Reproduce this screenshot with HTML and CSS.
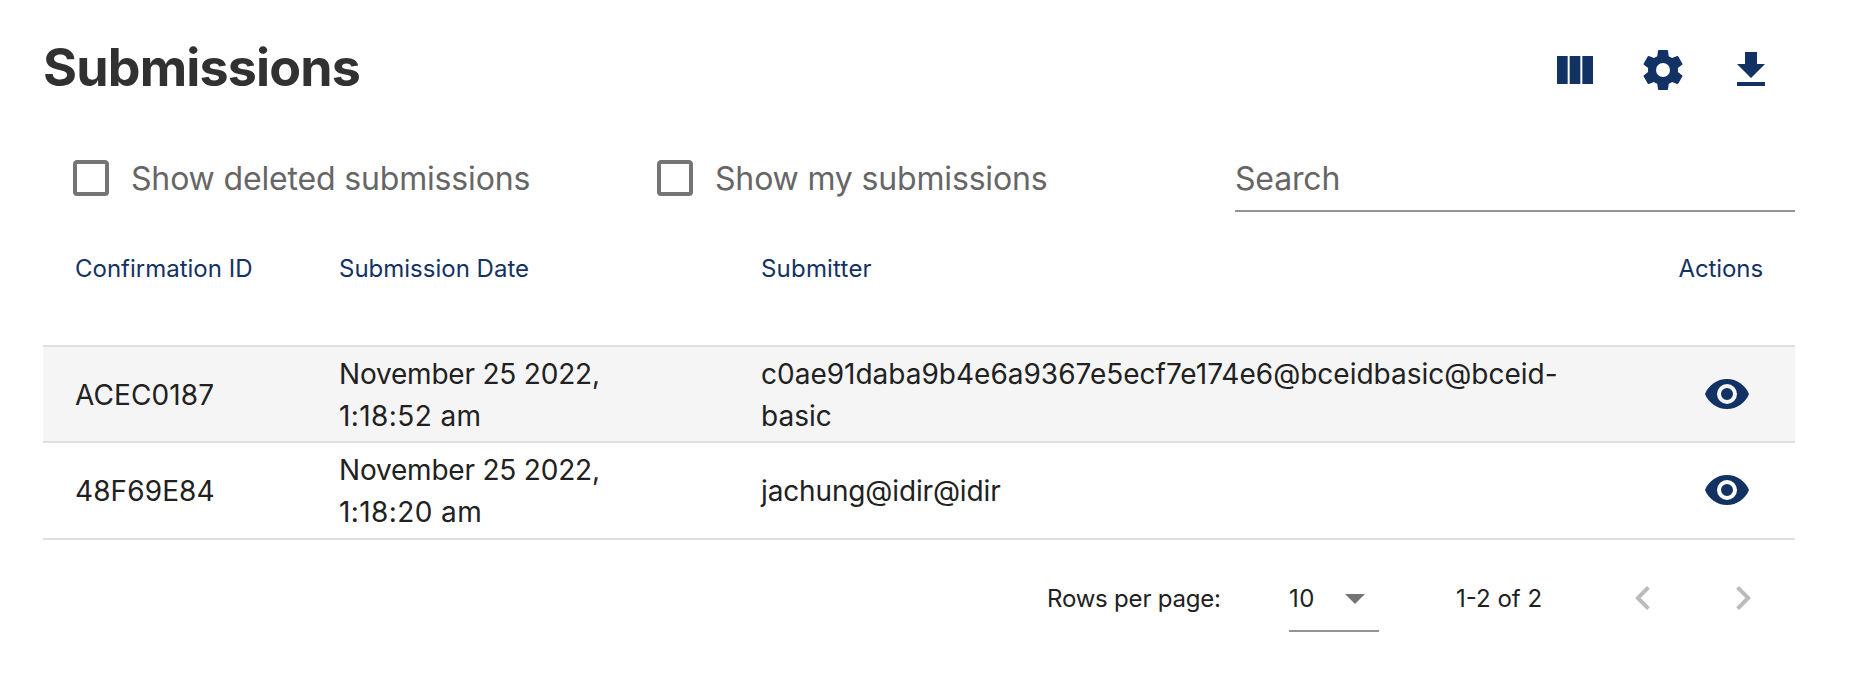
FILE: index.html
```html
<!DOCTYPE html>
<html lang="en">
<head>
<meta charset="utf-8">
<title>Submissions</title>
<link rel="stylesheet" href="styles.css">
</head>
<body>
<main class="page">
  <header class="page-header">
    <h1 class="title">Submissions</h1>
    <div class="toolbar">
      <svg class="icon" viewBox="0 0 24 24"><path d="M14.67,5V19H9.33V5H14.67M15.67,19H21V5H15.67V19M8.33,19V5H3V19H8.33Z"/></svg>
      <svg class="icon" viewBox="0 0 24 24"><path d="M12,15.5A3.5,3.5 0 0,1 8.5,12A3.5,3.5 0 0,1 12,8.5A3.5,3.5 0 0,1 15.5,12A3.5,3.5 0 0,1 12,15.5M19.43,12.97C19.47,12.65 19.5,12.33 19.5,12C19.5,11.67 19.47,11.34 19.43,11L21.54,9.37C21.73,9.22 21.78,8.95 21.66,8.73L19.66,5.27C19.54,5.05 19.27,4.96 19.05,5.05L16.56,6.05C16.04,5.66 15.5,5.32 14.87,5.07L14.5,2.42C14.46,2.18 14.25,2 14,2H10C9.75,2 9.54,2.18 9.5,2.42L9.13,5.07C8.5,5.32 7.96,5.66 7.44,6.05L4.95,5.05C4.73,4.96 4.46,5.05 4.34,5.27L2.34,8.73C2.21,8.95 2.27,9.22 2.46,9.37L4.57,11C4.53,11.34 4.5,11.67 4.5,12C4.5,12.33 4.53,12.65 4.57,12.97L2.46,14.63C2.27,14.78 2.21,15.05 2.34,15.27L4.34,18.73C4.46,18.95 4.73,19.03 4.95,18.95L7.44,17.94C7.96,18.34 8.5,18.68 9.13,18.93L9.5,21.58C9.54,21.82 9.75,22 10,22H14C14.25,22 14.46,21.82 14.5,21.58L14.87,18.93C15.5,18.67 16.04,18.34 16.56,17.94L19.05,18.95C19.27,19.03 19.54,18.95 19.66,18.73L21.66,15.27C21.78,15.05 21.73,14.78 21.54,14.63L19.43,12.97Z"/></svg>
      <svg class="icon" viewBox="0 0 24 24"><path d="M5,20H19V18H5M19,9H15V3H9V9H5L12,16L19,9Z"/></svg>
    </div>
  </header>
  <section class="filters">
    <label class="check"><svg class="icon box" viewBox="0 0 24 24"><path d="M19,3H5C3.89,3 3,3.89 3,5V19A2,2 0 0,0 5,21H19A2,2 0 0,0 21,19V5C21,3.89 20.1,3 19,3M19,5V19H5V5H19Z"/></svg><span class="check-label">Show deleted submissions</span></label>
    <label class="check"><svg class="icon box" viewBox="0 0 24 24"><path d="M19,3H5C3.89,3 3,3.89 3,5V19A2,2 0 0,0 5,21H19A2,2 0 0,0 21,19V5C21,3.89 20.1,3 19,3M19,5V19H5V5H19Z"/></svg><span class="check-label">Show my submissions</span></label>
    <div class="search">Search</div>
  </section>
  <table class="table">
    <colgroup><col class="col-id"><col class="col-date"><col class="col-user"><col class="col-actions"></colgroup>
    <thead><tr><th>Confirmation ID</th><th>Submission Date</th><th class="submitter">Submitter</th><th class="end">Actions</th></tr></thead>
    <tbody>
      <tr class="hovered">
        <td class="code">ACEC0187</td>
        <td><span class="date">November 25 2022,</span><br><span class="time">1:18:52 am</span></td>
        <td>c0ae91daba9b4e6a9367e5ecf7e174e6@bceidbasic@bceid-<br>basic</td>
        <td class="end"><svg class="icon eye" viewBox="0 0 24 24"><path d="M12,9A3,3 0 0,0 9,12A3,3 0 0,0 12,15A3,3 0 0,0 15,12A3,3 0 0,0 12,9M12,17A5,5 0 0,1 7,12A5,5 0 0,1 12,7A5,5 0 0,1 17,12A5,5 0 0,1 12,17M12,4.5C7,4.5 2.73,7.61 1,12C2.73,16.39 7,19.5 12,19.5C17,19.5 21.27,16.39 23,12C21.27,7.61 17,4.5 12,4.5Z"/></svg></td>
      </tr>
      <tr class="last">
        <td class="code">48F69E84</td>
        <td><span class="date">November 25 2022,</span><br><span class="time">1:18:20 am</span></td>
        <td class="user">jachung@idir@idir</td>
        <td class="end"><svg class="icon eye" viewBox="0 0 24 24"><path d="M12,9A3,3 0 0,0 9,12A3,3 0 0,0 12,15A3,3 0 0,0 15,12A3,3 0 0,0 12,9M12,17A5,5 0 0,1 7,12A5,5 0 0,1 12,7A5,5 0 0,1 17,12A5,5 0 0,1 12,17M12,4.5C7,4.5 2.73,7.61 1,12C2.73,16.39 7,19.5 12,19.5C17,19.5 21.27,16.39 23,12C21.27,7.61 17,4.5 12,4.5Z"/></svg></td>
      </tr>
    </tbody>
  </table>
  <footer class="pager">
    <span class="rows-label">Rows per page:</span>
    <div class="select"><span class="value">10</span><svg class="icon caret" viewBox="0 0 24 24"><path d="M7,10L12,15L17,10H7Z"/></svg></div>
    <span class="range">1-2 of 2</span>
    <svg class="icon nav prev" viewBox="0 0 24 24"><path d="M15.41,16.58L10.83,12L15.41,7.41L14,6L8,12L14,18L15.41,16.58Z"/></svg>
    <svg class="icon nav" viewBox="0 0 24 24"><path d="M8.59,16.58L13.17,12L8.59,7.41L10,6L16,12L10,18L8.59,16.58Z"/></svg>
  </footer>
</main>
</body>
</html>
```
FILE: styles.css
```css
* { box-sizing: border-box; }
body {
  margin: 0;
  background: #fff;
  color: #212121;
  font-family: Inter, "Liberation Sans", sans-serif;
}
.page { padding: 36px 69px 0 43px; }
.icon { display: block; flex: none; width: 48px; height: 48px; fill: #133264; }

.page-header { display: flex; justify-content: space-between; height: 106px; }
.title { margin: 0; color: #313132; font-size: 52px; font-weight: 700; line-height: 64px; letter-spacing: -0.85px; }
.toolbar { display: flex; gap: 40px; padding: 10px 20px 0 0; }

.filters { display: grid; grid-template-columns: 584px 608px 560px; height: 70px; color: #666; font-size: 32px; line-height: 50px; letter-spacing: -0.16px; }
.check { display: flex; align-items: flex-start; gap: 16px; padding: 12px 0 0 24px; }
.box { fill: #757575; }
.search { padding-top: 12px; border-bottom: 2px solid #949494; }

.table { width: 1752px; table-layout: fixed; border-spacing: 0; border-bottom: 2px solid #dfdfdf; font-size: 28px; line-height: 42px; }
.col-id { width: 264px; }
.col-date { width: 422px; }
.col-user { width: 880px; }
th { height: 133px; padding: 42px 32px 0; color: #133264; font-size: 24px; font-weight: 400; line-height: 30px; text-align: left; vertical-align: top; }
th.submitter { letter-spacing: 0.2px; }
th.end { text-align: right; letter-spacing: -0.1px; }
td { height: 96px; padding: 2px 32px 0; border-top: 2px solid #dfdfdf; vertical-align: middle; }
.hovered td { background: #f5f5f5; }
.last td { height: 97px; padding-bottom: 1px; }
.code { letter-spacing: 0.1px; }
.date { letter-spacing: -0.2px; }
.time { letter-spacing: 0.4px; }
.user { letter-spacing: -0.14px; }
td.end { padding-top: 0; padding-right: 44px; }
.eye { margin-left: auto; }

.pager { display: flex; padding-top: 44px; font-size: 24px; line-height: 30px; }
.rows-label { width: 242px; margin-left: 1004px; letter-spacing: -0.2px; }
.select { display: flex; justify-content: space-between; width: 90px; height: 48px; border-bottom: 2px solid #949494; }
.value { letter-spacing: 0.4px; }
.caret { margin-top: -10px; fill: #757575; }
.range { width: 163px; margin-left: 77px; }
.nav { margin-top: -10px; fill: #bbb; }
.prev { margin-right: 52px; }
```
